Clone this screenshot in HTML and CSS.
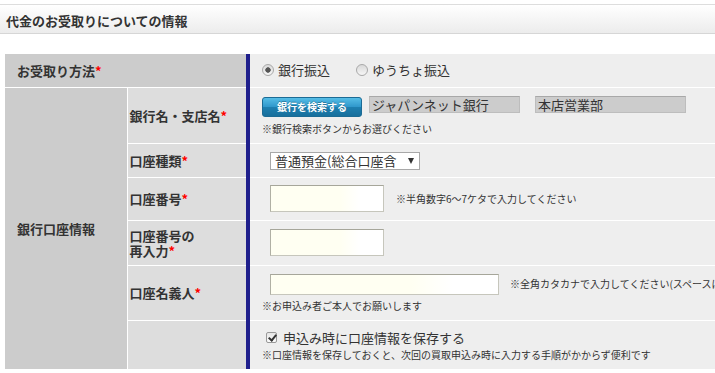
FILE: index.html
```html
<!DOCTYPE html>
<html lang="ja">
<head>
    <meta charset="utf-8" />
    <title>代金のお受取りについての情報</title>
    <link rel="stylesheet" href="styles.css">
</head>
<body>
    <h2 class="section-title">代金のお受取りについての情報</h2>

    <table class="form-table">
        <colgroup>
            <col class="col-group">
            <col class="col-label">
            <col class="col-field">
        </colgroup>
        <tr class="row-method">
            <th colspan="2" class="head-main">お受取り方法<span class="req">*</span></th>
            <td class="field">
                <label class="choice"><input type="radio" name="method" class="radio" checked>銀行振込</label>
                <label class="choice"><input type="radio" name="method" class="radio">ゆうちょ振込</label>
            </td>
        </tr>
        <tr class="row-bank">
            <th rowspan="6" class="head-main head-group">銀行口座情報</th>
            <th class="head-sub">銀行名・支店名<span class="req">*</span></th>
            <td class="field">
                <div class="bank-line">
                    <button type="button" class="btn-search">銀行を検索する</button>
                    <input type="text" class="readonly" value="ジャパンネット銀行" readonly>
                    <input type="text" class="readonly readonly-branch" value="本店営業部" readonly>
                </div>
                <p class="note note-bank">※銀行検索ボタンからお選びください</p>
            </td>
        </tr>
        <tr class="row-type">
            <th class="head-sub">口座種類<span class="req">*</span></th>
            <td class="field">
                <span class="select-wrap">
                    <select class="select">
                        <option>普通預金(総合口座含む)</option>
                        <option>当座預金</option>
                    </select>
                </span>
            </td>
        </tr>
        <tr class="row-number">
            <th class="head-sub">口座番号<span class="req">*</span></th>
            <td class="field">
                <div class="input-line">
                    <input type="text" class="text text-short">
                    <span class="note note-side">※半角数字6～7ケタで入力してください</span>
                </div>
            </td>
        </tr>
        <tr class="row-confirm">
            <th class="head-sub head-two">口座番号の<br>再入力<span class="req">*</span></th>
            <td class="field">
                <input type="text" class="text text-short">
            </td>
        </tr>
        <tr class="row-name">
            <th class="head-sub">口座名義人<span class="req">*</span></th>
            <td class="field">
                <div class="input-line">
                    <input type="text" class="text text-name">
                    <span class="note note-name">※全角カタカナで入力してください(スペースは不要です)</span>
                </div>
                <p class="note note-below">※お申込み者ご本人でお願いします</p>
            </td>
        </tr>
        <tr class="row-save">
            <th class="head-sub"></th>
            <td class="field">
                <label class="choice choice-save"><input type="checkbox" class="check" checked>申込み時に口座情報を保存する</label>
                <p class="note note-save">※口座情報を保存しておくと、次回の買取申込み時に入力する手順がかからず便利です</p>
            </td>
        </tr>
    </table>
</body>
</html>
```

FILE: styles.css
```css
html, body {
    margin: 0;
    overflow: hidden;
    background-color: #fff;
}

body {
    font-family: "Noto Sans CJK JP", "Noto Sans", sans-serif;
    font-size: 13px;
    color: #333;
}

.section-title {
    margin: 4px 0 0;
    height: 30px;
    box-sizing: border-box;
    padding: 8px 0 0 6px;
    border-top: 1px solid #ddd;
    border-bottom: 1px solid #d6d6d6;
    background: linear-gradient(#fff, #ececec);
    font-size: 13px;
    line-height: 16px;
    font-weight: bold;
}

/* form table */
.form-table {
    margin: 20px 0 0 5px;
    border-collapse: collapse;
    table-layout: fixed;
    width: 780px;
}

.col-group {
    width: 122px;
}

.col-label {
    width: 121px;
}

.form-table th,
.form-table td {
    padding: 0;
    text-align: left;
    vertical-align: middle;
    border-bottom: 1px solid #fff;
}

.form-table tr:last-child > * {
    border-bottom: 0;
}

.row-method { height: 33px; }
.row-bank { height: 56px; }
.row-type { height: 34px; }
.row-number { height: 43px; }
.row-confirm { height: 45px; }
.row-name { height: 55px; }
.row-save { height: 49px; }

.head-main {
    background-color: #ccc;
    padding-left: 12px !important;
    font-weight: bold;
}

.head-group {
    border-right: 1px solid #fff;
    border-bottom: 0 !important;
}

.head-sub {
    background-color: #ddd;
    padding-left: 2px !important;
    font-weight: bold;
}

.head-two {
    line-height: 15px;
}

.req {
    color: #f00;
}

.field {
    background-color: #eee;
    border-left: 4px solid #1f1f8c;
    padding-left: 12px !important;
}

/* radios and checkbox */
.choice {
    display: inline-flex;
    align-items: center;
    margin-right: 23px;
    font-size: 13px;
    line-height: 16px;
}

.radio {
    appearance: none;
    margin: 0 4px 0 0;
    width: 12px;
    height: 12px;
    border-radius: 50%;
    border: 1px solid #a9a9a9;
    background: linear-gradient(#d9d9d9, #f6f6f6);
}

.radio:checked {
    background: radial-gradient(circle, #555 0 2.4px, transparent 3px), linear-gradient(#d9d9d9, #f6f6f6);
}

.check {
    appearance: none;
    position: relative;
    margin: 0 6px 0 4px;
    width: 11px;
    height: 11px;
    border: 1px solid #999;
    border-radius: 2px;
    background: linear-gradient(#e6e6e6, #fafafa);
}

.check:checked::after {
    content: '';
    position: absolute;
    left: 3px;
    top: 0;
    width: 3px;
    height: 6px;
    border: solid #333;
    border-width: 0 2px 2px 0;
    transform: rotate(40deg);
}

/* bank search */
.bank-line {
    display: flex;
    align-items: flex-start;
}

.btn-search {
    width: 100px;
    height: 20px;
    margin-top: 1px;
    padding: 0;
    border: 1px solid #1b6b95;
    border-radius: 3px;
    background: linear-gradient(#55bde6, #2f97cb 50%, #1d7fb0 52%, #186f9c);
    color: #fff;
    font-family: inherit;
    font-size: 10px;
    font-weight: bold;
    line-height: 16px;
    text-shadow: 0 -1px 0 rgba(0, 0, 0, 0.25);
}

.readonly {
    width: 151px;
    height: 17px;
    box-sizing: border-box;
    margin: 0 0 0 7px;
    padding: 0 2px;
    border: 1px solid #bdbdbd;
    border-top-color: #a8a8a8;
    background-color: #ccc;
    font-family: inherit;
    font-size: 13px;
    color: #333;
}

.readonly-branch {
    margin-left: 15px;
}

.note {
    margin: 0;
    font-size: 10px;
    line-height: 12px;
}

.note-bank {
    margin-top: 6px;
}

/* select */
.select-wrap {
    position: relative;
    display: inline-block;
    margin-left: 8px;
    vertical-align: middle;
}

.select {
    appearance: none;
    display: block;
    width: 150px;
    height: 18px;
    box-sizing: border-box;
    margin: 0;
    padding: 0 22px 0 4px;
    border: 1px solid #a8a8a8;
    border-radius: 0;
    background-color: #fff;
    font-family: inherit;
    font-size: 13px;
    line-height: 16px;
    color: #333;
}

.select-wrap::after {
    content: '';
    position: absolute;
    right: 6px;
    top: 6px;
    border-left: 3px solid transparent;
    border-right: 3px solid transparent;
    border-top: 6px solid #333;
    pointer-events: none;
}

/* text inputs */
.input-line {
    display: flex;
    align-items: center;
}

.text {
    display: block;
    box-sizing: border-box;
    margin: 0 0 0 8px;
    padding: 0 3px;
    border: 1px solid #c6c6bc;
    border-top-color: #a6a69a;
    border-left-color: #b0b0a4;
    background: linear-gradient(to right, #fffff2 62%, #fff 80%);
    font-family: inherit;
    font-size: 13px;
}

.text-short {
    width: 114px;
    height: 27px;
}

.text-name {
    width: 229px;
    height: 21px;
}

.note-side {
    margin-left: 12px;
}

.note-name {
    margin-left: 11px;
    white-space: nowrap;
}

.note-below {
    margin-top: 5px;
}

.choice-save {
    margin-right: 0;
}

.note-save {
    margin-top: 2px;
}
```
